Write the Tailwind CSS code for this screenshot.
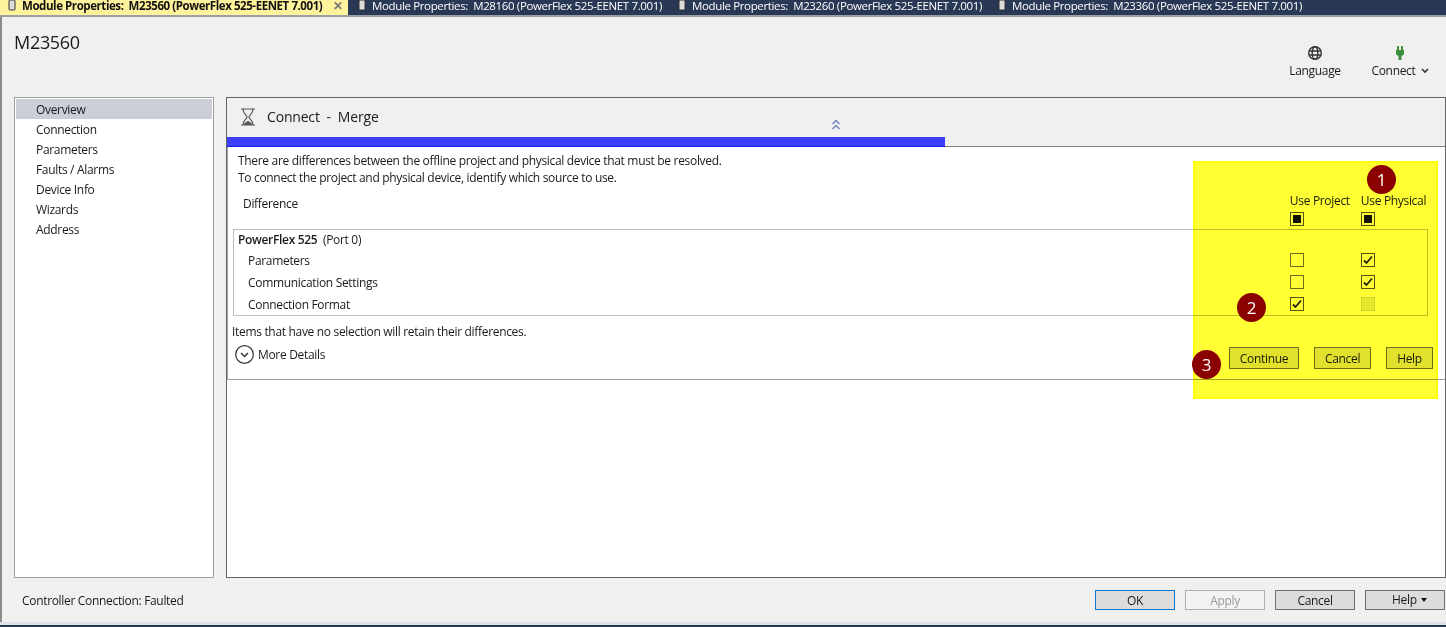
<!DOCTYPE html>
<html lang="en">
<head>
    <meta charset="UTF-8">
    <title>Module Properties</title>
    <script src="https://cdn.jsdelivr.net/npm/@tailwindcss/browser@4"></script>
</head>
<body class="relative w-[1446px] h-[627px] overflow-hidden bg-[#f0f0f0] font-['Open_Sans',sans-serif] text-[12px] leading-[16px] tracking-[-0.32px] text-[#1a1a1a]">
    <!-- tab strip -->
    <div class="flex h-[15px] bg-[#293955] text-white text-[11.5px] leading-[11px] font-semibold overflow-hidden">
        <div class="flex w-[348px] items-start bg-[#fff29d] pl-[8px] text-[#111] font-bold tracking-[-0.43px]">
            <svg class="w-[8px] h-[11px] shrink-0" viewBox="0 0 8 11"><rect x="1" y="0" width="6" height="10" rx="1" fill="#ddd" stroke="#333"/></svg>
            <span class="ml-[6px] whitespace-pre">Module Properties:  M23560 (PowerFlex 525-EENET 7.001)</span>
            <span class="ml-auto mr-[5px] text-[#777] text-[12px]">✕</span>
        </div>
        <div class="flex items-start pl-[10px] w-[320px] font-normal tracking-[-0.36px]">
            <svg class="w-[8px] h-[11px] shrink-0" viewBox="0 0 8 11"><rect x="1" y="0" width="6" height="10" rx="1" fill="#ddd" stroke="#333"/></svg>
            <span class="ml-[6px] whitespace-pre">Module Properties:  M28160 (PowerFlex 525-EENET 7.001)</span>
        </div>
        <div class="flex items-start pl-[10px] w-[320px] font-normal tracking-[-0.36px]">
            <svg class="w-[8px] h-[11px] shrink-0" viewBox="0 0 8 11"><rect x="1" y="0" width="6" height="10" rx="1" fill="#ddd" stroke="#333"/></svg>
            <span class="ml-[6px] whitespace-pre">Module Properties:  M23260 (PowerFlex 525-EENET 7.001)</span>
        </div>
        <div class="flex items-start pl-[10px] font-normal tracking-[-0.36px]">
            <svg class="w-[8px] h-[11px] shrink-0" viewBox="0 0 8 11"><rect x="1" y="0" width="6" height="10" rx="1" fill="#ddd" stroke="#333"/></svg>
            <span class="ml-[6px] whitespace-pre">Module Properties:  M23360 (PowerFlex 525-EENET 7.001)</span>
        </div>
    </div>
    <div class="h-[2px] bg-[#9a9fa8]"></div>

    <div class="flex flex-col h-[605px] border-l-2 border-[#8a8a8a]">
        <!-- title row -->
        <div class="flex h-[80px] pl-[12px]">
            <h1 class="mt-[15px] text-[18px] leading-[21px] font-normal tracking-[-0.3px]">M23560</h1>
            <div class="ml-auto flex">
                <div class="flex flex-col items-center w-[72px] mt-[28px]">
                    <svg class="w-[16px] h-[16px]" viewBox="0 0 16 16" fill="none" stroke="#333" stroke-width="1.400"><circle cx="8" cy="8" r="6.300"/><ellipse cx="8" cy="8" rx="2.800" ry="6.300"/><path d="M2 6h12M2 10h12"/></svg>
                    <span class="mt-[2px]">Language</span>
                </div>
                <div class="flex flex-col items-center w-[72px] mt-[28px] mr-[10px] ml-[13px]">
                    <svg class="w-[16px] h-[16px]" viewBox="0 0 16 16" fill="#3f8f3f"><path d="M5 1h2v4H5zM9 1h2v4H9zM4 5h8v4.500L9.500 11v4h-3v-4L4 9.500z"/></svg>
                    <span class="mt-[2px] flex items-center gap-[5px]">Connect
                        <svg class="w-[8px] h-[6px]" viewBox="0 0 8 6" fill="none" stroke="#333" stroke-width="1.600"><path d="M1 1l3 3 3-3"/></svg>
                    </span>
                </div>
            </div>
        </div>

        <div class="flex h-[481px] pl-[12px]">
            <!-- side nav -->
            <nav class="w-[200px] shrink-0 border border-[#a0a0a0] bg-white p-[1px]">
                <div class="h-[20px] pl-[20px] leading-[22px] bg-[#cbced6]">Overview</div>
                <div class="h-[20px] pl-[20px] leading-[22px]">Connection</div>
                <div class="h-[20px] pl-[20px] leading-[22px]">Parameters</div>
                <div class="h-[20px] pl-[20px] leading-[22px]">Faults / Alarms</div>
                <div class="h-[20px] pl-[20px] leading-[22px]">Device Info</div>
                <div class="h-[20px] pl-[20px] leading-[22px]">Wizards</div>
                <div class="h-[20px] pl-[20px] leading-[22px]">Address</div>
            </nav>

            <!-- merge panel -->
            <section class="ml-[12px] flex-1 flex flex-col border border-[#646464] bg-white">
                <div class="relative flex items-center h-[39px] bg-[#f0f0f0] pl-[13px] pb-[1px]">
                    <svg class="w-[16px] h-[18px]" viewBox="0 0 16 18" fill="none" stroke="#555" stroke-width="1.200"><path d="M1 1h14M1 17h14M3 1c0 5 4 6 4 8s-4 3-4 8M13 1c0 5-4 6-4 8s4 3 4 8"/><path d="M4.500 16.500c1-2 2.500-2.500 3.500-3 1 .5 2.500 1 3.500 3z" fill="#555"/></svg>
                    <span class="ml-[11px] text-[14px] tracking-[-0.18px] whitespace-pre">Connect  -  Merge</span>
                    <svg class="absolute left-[604px] top-[21px] w-[10px] h-[11px]" viewBox="0 0 10 11" fill="none" stroke="#6a80b8" stroke-width="1.300"><path d="M1.500 5l3.500-3.500L8.500 5M1.500 10l3.500-3.500L8.500 10"/></svg>
                </div>
                <div class="h-[10px] border-b border-[#808080] bg-[#f0f0f0]"><div class="w-[718px] h-[10px] bg-[#3e3efe] border-b border-[#1c1cf0]"></div></div>

                <div class="relative h-[233px] border-b border-l border-[#a0a0a0] pt-[6px] pl-[10px]">
                    <p>There are differences between the offline project and physical device that must be resolved.</p>
                    <p class="mt-[1px]">To connect the project and physical device, identify which source to use.</p>
                    <div class="mt-[10px] pl-[5px] h-[16px] flex">
                        <span>Difference</span>
                        <div class="relative flex-1">
                            <span class="absolute left-[992px] -top-[3px] whitespace-nowrap">Use Project</span>
                            <span class="absolute left-[1063px] -top-[3px] whitespace-nowrap">Use Physical</span>
                            <span class="absolute left-[992px] top-[16px] w-[14px] h-[14px] border border-[#555] flex items-center justify-center"><i class="block w-[8px] h-[8px] bg-[#111]"></i></span>
                            <span class="absolute left-[1063px] top-[16px] w-[14px] h-[14px] border border-[#555] flex items-center justify-center"><i class="block w-[8px] h-[8px] bg-[#111]"></i></span>
                        </div>
                    </div>
                    <div class="mt-[17px] -ml-[5px] mr-[17px] h-[87px] border border-[#bdbdbd] pl-[4px]">
                        <div class="h-[20px] leading-[20px] whitespace-pre"><b class="font-semibold">PowerFlex 525</b>  (Port 0)</div>
                        <div class="flex h-[22px] items-center pl-[10px]">
                            <span>Parameters</span>
                            <span class="ml-auto mr-[52px] mb-[2px] flex gap-[57px]">
                                <i class="block w-[14px] h-[14px] border border-[#6e6e6e]"></i>
                                <i class="flex w-[14px] h-[14px] border border-[#555] items-center justify-center"><svg class="w-[10px] h-[10px]" viewBox="0 0 10 10" fill="none" stroke="#222" stroke-width="1.800"><path d="M1 5.500l2.500 2.500L9 1.500"/></svg></i>
                            </span>
                        </div>
                        <div class="flex h-[22px] items-center pl-[10px]">
                            <span>Communication Settings</span>
                            <span class="ml-auto mr-[52px] mb-[2px] flex gap-[57px]">
                                <i class="block w-[14px] h-[14px] border border-[#6e6e6e]"></i>
                                <i class="flex w-[14px] h-[14px] border border-[#555] items-center justify-center"><svg class="w-[10px] h-[10px]" viewBox="0 0 10 10" fill="none" stroke="#222" stroke-width="1.800"><path d="M1 5.500l2.500 2.500L9 1.500"/></svg></i>
                            </span>
                        </div>
                        <div class="flex h-[22px] items-center pl-[10px]">
                            <span>Connection Format</span>
                            <span class="ml-auto mr-[52px] mb-[2px] flex gap-[57px]">
                                <i class="flex w-[14px] h-[14px] border border-[#555] items-center justify-center"><svg class="w-[10px] h-[10px]" viewBox="0 0 10 10" fill="none" stroke="#222" stroke-width="1.800"><path d="M1 5.500l2.500 2.500L9 1.500"/></svg></i>
                                <i class="block w-[14px] h-[14px] border border-[#d0d0d0] bg-[#e6e6e6]"></i>
                            </span>
                        </div>
                    </div>
                    <p class="mt-[8px] -ml-[6px]">Items that have no selection will retain their differences.</p>
                    <div class="mt-[5px] -ml-[3px] flex items-center gap-[4px]">
                        <svg class="w-[19px] h-[19px]" viewBox="0 0 19 19" fill="none" stroke="#333" stroke-width="1.200"><circle cx="9.500" cy="9.500" r="8.800"/><path d="M6 8l3.500 3.500L13 8" stroke-width="1.500"/></svg>
                        <span>More Details</span>
                    </div>
                    <div class="absolute right-[12px] top-[200px] flex gap-[15px]">
                        <span class="w-[70px] h-[22px] border border-[#6e6e6e] bg-[#e0e0e0] text-center leading-[21px]">Continue</span>
                        <span class="w-[57px] h-[22px] border border-[#6e6e6e] bg-[#e0e0e0] text-center leading-[21px]">Cancel</span>
                        <span class="w-[47px] h-[22px] border border-[#6e6e6e] bg-[#e0e0e0] text-center leading-[21px]">Help</span>
                    </div>
                </div>
            </section>
        </div>

        <!-- footer -->
        <div class="flex items-center h-[44px] pl-[20px] pr-[1px]">
            <span class="mt-[1px]">Controller Connection: Faulted</span>
            <div class="ml-auto flex gap-[10px]">
                <span class="w-[80px] h-[20px] border border-[#0a78d7] bg-[#dcdcdc] text-center leading-[20px]">OK</span>
                <span class="w-[80px] h-[20px] border border-[#b0b0b0] bg-[#f3f3f3] text-[#9a9a9a] text-center leading-[20px]">Apply</span>
                <span class="w-[80px] h-[20px] border border-[#6e6e6e] bg-[#dcdcdc] text-center leading-[20px]">Cancel</span>
                <span class="w-[80px] h-[20px] border border-[#6e6e6e] bg-[#dcdcdc] leading-[20px] pl-[26px] flex items-center gap-[4px]">Help <i class="block w-0 h-0 border-x-[3.500px] border-x-transparent border-t-[4px] border-t-[#111]"></i></span>
            </div>
        </div>
    </div>
    <div class="absolute left-0 bottom-0 w-full h-[5px] border-b-[2px] border-[#293955] bg-[#dfe3ea]"></div>

    <!-- annotation overlay -->
    <div class="absolute left-[1193px] top-[161px] w-[245px] h-[238px] border-2 border-[#ffff00] bg-[#ffff33] mix-blend-multiply"></div>
    <span class="absolute left-[1367px] top-[165px] w-[29px] h-[29px] rounded-full bg-[#8b0000] text-white text-[17px] leading-[29px] text-center">1</span>
    <span class="absolute left-[1237px] top-[293px] w-[29px] h-[29px] rounded-full bg-[#8b0000] text-white text-[17px] leading-[29px] text-center">2</span>
    <span class="absolute left-[1192px] top-[350px] w-[29px] h-[29px] rounded-full bg-[#8b0000] text-white text-[17px] leading-[29px] text-center">3</span>
</body>
</html>
